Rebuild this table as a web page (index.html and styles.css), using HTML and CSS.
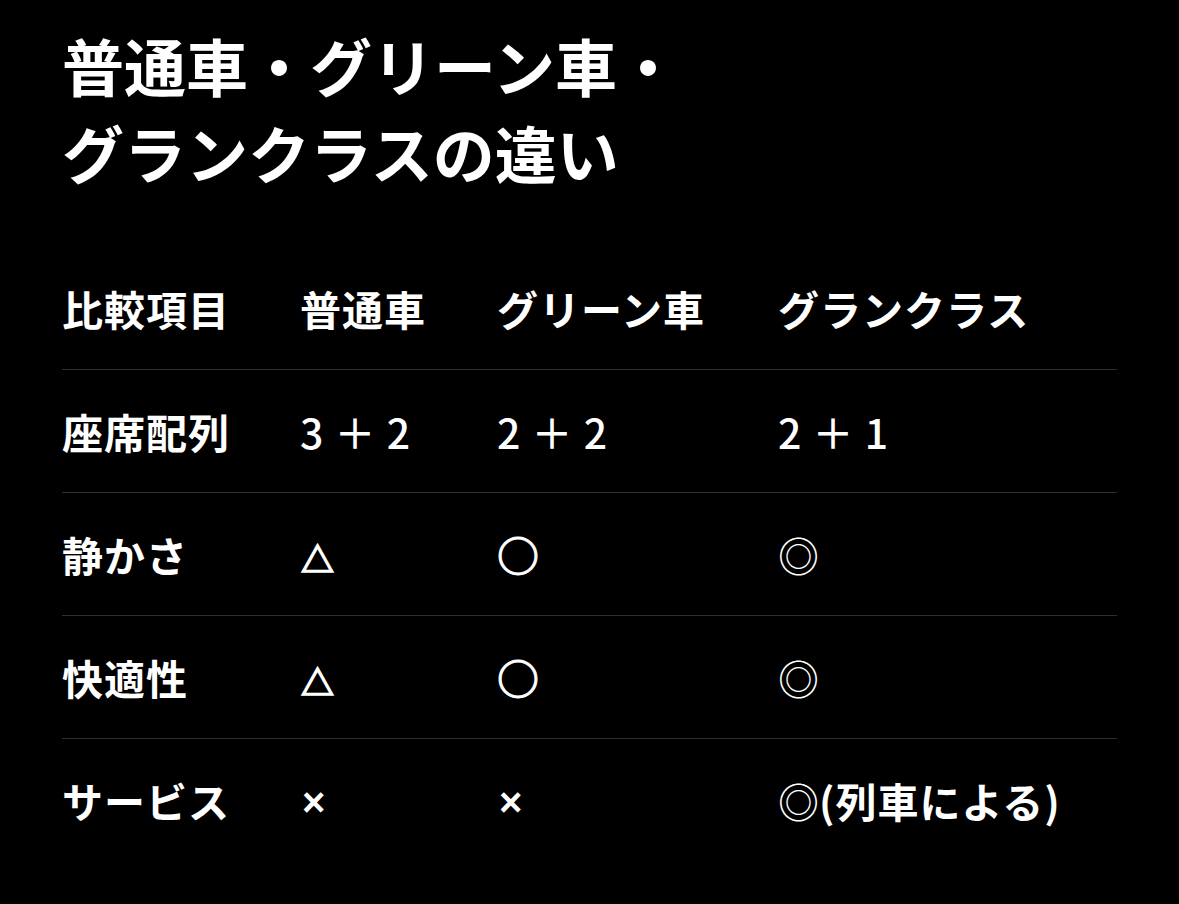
FILE: index.html
```html
<!DOCTYPE html>
<html lang="ja">
<head>
<meta charset="utf-8">
<title>普通車・グリーン車・グランクラスの違い</title>
<link rel="stylesheet" href="styles.css">
</head>
<body>
<main class="page">
  <h1 class="title">普通車・グリーン車・<br>グランクラスの違い</h1>
  <div class="table">
    <div class="row head">
      <div class="cell">比較項目</div>
      <div class="cell">普通車</div>
      <div class="cell">グリーン車</div>
      <div class="cell">グランクラス</div>
    </div>
    <div class="row">
      <div class="cell label">座席配列</div>
      <div class="cell num">3 ＋ 2</div>
      <div class="cell num">2 ＋ 2</div>
      <div class="cell num">2 ＋ 1</div>
    </div>
    <div class="row">
      <div class="cell label">静かさ</div>
      <div class="cell"><span class="tri">△</span></div>
      <div class="cell"><span class="circ">○</span></div>
      <div class="cell"><span class="dbl">◎</span></div>
    </div>
    <div class="row">
      <div class="cell label">快適性</div>
      <div class="cell"><span class="tri">△</span></div>
      <div class="cell"><span class="circ">○</span></div>
      <div class="cell"><span class="dbl">◎</span></div>
    </div>
    <div class="row">
      <div class="cell label">サービス</div>
      <div class="cell"><span class="cross">×</span></div>
      <div class="cell"><span class="cross">×</span></div>
      <div class="cell"><span class="dbl">◎</span>(列車による)</div>
    </div>
  </div>
</main>
</body>
</html>
```
FILE: styles.css
```css
html, body {
  margin: 0;
  padding: 0;
  background: #000;
}
body {
  color: #fff;
  font-family: "Noto Sans CJK JP", "Noto Sans", sans-serif;
}
.page {
  padding: 22px 62px 0 62px;
  width: 1055px;
}
.title {
  margin: 0;
  font-size: 62px;
  line-height: 87px;
  font-weight: 700;
}
.table {
  margin-top: 51px;
}
.row {
  display: grid;
  grid-template-columns: 238px 197px 281px 339px;
  height: 122px;
  align-items: center;
  border-top: 1px solid #2e2e2e;
}
.row.head {
  border-top: none;
}
.cell {
  font-size: 41px;
  font-weight: 600;
  line-height: 1;
  letter-spacing: 1px;
  white-space: nowrap;
}
.row.head .cell {
  font-weight: 700;
}
.cell.num {
  font-weight: 500;
  letter-spacing: 1px;
}
.tri {
  font-weight: 900;
  font-size: 33px;
  letter-spacing: 0;
  -webkit-text-stroke: 1.5px #fff;
  margin-left: 1px;
}
.circ {
  font-weight: 900;
  font-size: 42px;
  letter-spacing: 0;
  -webkit-text-stroke: 1px #fff;
}
.dbl {
  font-weight: 400;
  font-size: 41px;
  letter-spacing: 0;
}
.cross {
  font-family: "Liberation Sans", sans-serif;
  font-weight: 700;
  font-size: 40px;
  margin-left: 2px;
}
```
